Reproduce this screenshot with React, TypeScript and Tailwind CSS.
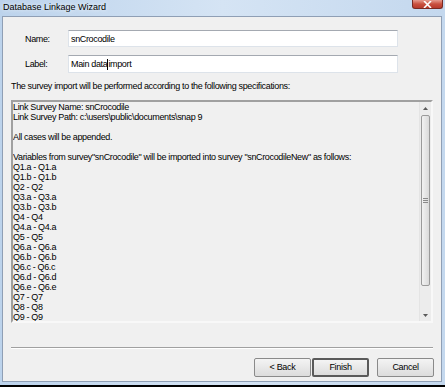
import React from 'react';

const lines: string[] = [
  'Link Survey Name: snCrocodile',
  'Link Survey Path: c:\\users\\public\\documents\\snap 9',
  '',
  'All cases will be appended.',
  '',
  'Variables from survey"snCrocodile" will be imported into survey "snCrocodileNew" as follows:',
  'Q1.a - Q1.a',
  'Q1.b - Q1.b',
  'Q2 - Q2',
  'Q3.a - Q3.a',
  'Q3.b - Q3.b',
  'Q4 - Q4',
  'Q4.a - Q4.a',
  'Q5 - Q5',
  'Q6.a - Q6.a',
  'Q6.b - Q6.b',
  'Q6.c - Q6.c',
  'Q6.d - Q6.d',
  'Q6.e - Q6.e',
  'Q7 - Q7',
  'Q8 - Q8',
  'Q9 - Q9',
];

const Button: React.FC<{ label: string; primary?: boolean }> = ({ label, primary }) => (
  <button
    className={
      primary
        ? 'w-[57px] h-[19px] rounded-[2px] border-2 border-[#5a5a5a] bg-gradient-to-b from-[#f4f4f4] to-[#dcdcdc] text-[9px] tracking-[-0.3px] leading-none text-black'
        : 'w-[57px] h-[19px] rounded-[2px] border border-[#8a8a8a] bg-gradient-to-b from-[#f4f4f4] to-[#dcdcdc] text-[9px] tracking-[-0.3px] leading-none text-black'
    }
  >
    {label}
  </button>
);

const App: React.FC = () => {
  return (
    <div className="w-[445px] h-[387px] bg-black overflow-hidden font-['Liberation_Sans',Arial,sans-serif] text-black">
      <div className="h-[385px] flex flex-col bg-gradient-to-r from-[#bcd3ec] via-[#d5e4f4] to-[#c4d8ee]">
        {/* Title bar */}
        <div className="h-[16px] flex items-start justify-between pl-[3px] pr-[2px]">
          <span className="text-[9px] leading-[14px] text-black [text-shadow:0_0_4px_#ffffff]">
            Database Linkage Wizard
          </span>
          <div className="w-[31px] h-[9px] rounded-b-[3px] border border-t-0 border-[#7a2a22] bg-gradient-to-b from-[#e59a8e] via-[#c9503f] to-[#b83a2c] flex items-center justify-center">
            <svg width="9" height="7" viewBox="0 0 9 7">
              <path d="M1 0 L8 7 M8 0 L1 7" stroke="#ffffff" strokeWidth="1.6" />
            </svg>
          </div>
        </div>

        {/* Client area */}
        <div className="flex-1 ml-[2px] mr-[3px] mb-[3px] border border-[#8f9fb5] bg-[#f0f0f0] flex flex-col text-[9px] tracking-[-0.35px]">
          <div className="mt-[13px] h-[17px] flex items-center pl-[22px]">
            <span className="w-[43px] leading-[10px]">Name:</span>
            <div className="w-[330px] h-[17px] bg-white border border-[#dde3ea] border-t-[#a4a9b1] flex items-center pl-[2px] leading-[10px]">
              snCrocodile
            </div>
          </div>
          <div className="mt-[8px] h-[18px] flex items-center pl-[22px]">
            <span className="w-[43px] leading-[10px]">Label:</span>
            <div className="w-[330px] h-[18px] bg-white border border-[#dde3ea] border-t-[#a4a9b1] flex items-center pl-[2px] leading-[10px]">
              Main data<span className="inline-block w-px h-[11px] bg-black" />import
            </div>
          </div>

          <p className="mt-[8px] ml-[8px] h-[10px] leading-[10px]">
            The survey import will be performed according to the following specifications:
          </p>

          <div className="mt-[9px] mx-[8px] h-[223px] border-2 border-t-[#a0a0a0] border-l-[#a0a0a0] border-r-[#f8f8f8] border-b-[#f8f8f8] flex overflow-hidden">
            <div className="flex-1 overflow-hidden leading-[10px] whitespace-pre">
              {lines.map((l, i) => (
                <div key={i} className="h-[10px]">{l || ' '}</div>
              ))}
            </div>
            {/* Scrollbar */}
            <div className="w-[12px] flex flex-col bg-[#ececec] border-l border-[#e4e4e4]">
              <div className="h-[13px] flex items-center justify-center">
                <svg width="5" height="3" viewBox="0 0 5 3">
                  <path d="M0 3 L2.5 0 L5 3 Z" fill="#5a5a5a" />
                </svg>
              </div>
              <div className="h-[171px] mx-[1px] rounded-[2px] border border-[#9a9a9a] bg-gradient-to-r from-[#f2f2f2] to-[#dadada] flex items-center justify-center">
                <div className="flex flex-col gap-[1px]">
                  <div className="w-[5px] h-px bg-[#8a8a8a]" />
                  <div className="w-[5px] h-px bg-[#8a8a8a]" />
                  <div className="w-[5px] h-px bg-[#8a8a8a]" />
                </div>
              </div>
              <div className="flex-1 flex items-end justify-center pb-[4px]">
                <svg width="5" height="3" viewBox="0 0 5 3">
                  <path d="M0 0 L2.5 3 L5 0 Z" fill="#5a5a5a" />
                </svg>
              </div>
            </div>
          </div>

          <div className="mt-[24px] mx-[8px] h-[2px] border-t border-[#a0a0a0] border-b border-b-white" />

          <div className="mt-[9px] flex justify-end pr-[7px]">
            <Button label="< Back" />
            <div className="ml-[1px]">
              <Button label="Finish" primary />
            </div>
            <div className="ml-[8px]">
              <Button label="Cancel" />
            </div>
          </div>
        </div>
      </div>
    </div>
  );
};

export default App;
